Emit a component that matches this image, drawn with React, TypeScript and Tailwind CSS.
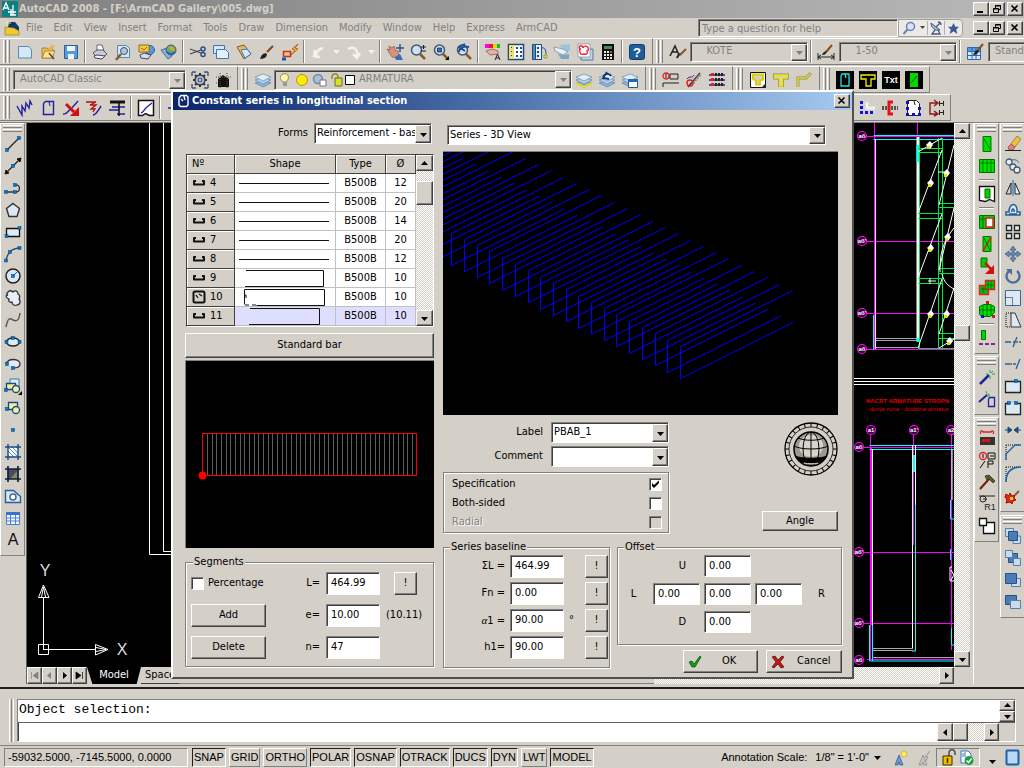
import type { ReactNode } from "react";

const raised =
  "border border-t-white border-l-white border-r-[#404040] border-b-[#404040] shadow-[inset_-1px_-1px_0_#808080] bg-[#d4d0c8]";
const sunken =
  "border border-t-[#808080] border-l-[#808080] border-r-white border-b-white shadow-[inset_1px_1px_0_#404040]";
const dither =
  "bg-[repeating-conic-gradient(#ffffff_0_25%,#d4d0c8_0_50%)] bg-[length:2px_2px]";

// ---------------------------------------------------------------- icons

const page = <path d="M2.500 3.500h10l3 3v8.500h-13z" fill="#d5e8f7" stroke="#5b87b0" />;
const lens = (
  <>
    <path d="M11 11l5 5" stroke="#8a5a28" strokeWidth="2.5" />
    <circle cx="7.500" cy="7" r="5" fill="#cfe0f0" stroke="#3f5878" strokeWidth="1.500" />
  </>
);
const layers = (
  <>
    <path d="M1 12l8-3 8 3-8 4z" fill="#8fb4d8" stroke="#5078a0" strokeWidth=".6" />
    <path d="M1 9l8-3 8 3-8 4z" fill="#b8d2ea" stroke="#5078a0" strokeWidth=".6" />
    <path d="M1 6l8-3 8 3-8 4z" fill="#e0edf8" stroke="#5078a0" strokeWidth=".6" />
  </>
);
const greenBox = <path d="M5 1.500h8v15H5z" fill="#00e000" stroke="#007000" />;
const dot = (x: number, y: number) => (
  <rect x={x - 1.5} y={y - 1.5} width="3" height="3" fill="#0078d8" stroke="#00407c" strokeWidth=".5" />
);

const icons: Record<string, ReactNode> = {
  New: page,
  Open: (
    <>
      <path d="M3 5h5l1 1h5v9H3z" fill="#e8c050" stroke="#8a6a20" strokeWidth=".7" />
      <path d="M3 15l3-7h10l-3 7z" fill="#ffe28a" stroke="#8a6a20" strokeWidth=".7" />
      <path d="M9 6l4-4 3 1-4 5z" fill="#f0b040" />
      <path d="M10 10l5 6" stroke="#446" strokeWidth="1.500" />
    </>
  ),
  Save: (
    <>
      <path d="M2.500 2.500h13v13h-13z" fill="#5a9ad8" stroke="#2a5e98" />
      <path d="M5 3h8v5H5zM6 11h6v5H6z" fill="#eaf4fc" />
    </>
  ),
  Plot: (
    <>
      <path d="M6 2h5l2 6H6z" fill="#fff" stroke="#667" />
      <path d="M2 10l4-3h6l4 4-4 3-7-1z" fill="#c8ccd8" stroke="#556" />
      <path d="M3 13l3-1 8 1-3 3-7-1z" fill="#eef" stroke="#446" />
    </>
  ),
  "Plot Preview": (
    <>
      <path d="M3.500 2.500h9l3 3v9h-12z" fill="#d5e8f7" stroke="#5b87b0" />
      <circle cx="10" cy="8" r="3.500" fill="#a9c8e4" stroke="#456" />
      <path d="M7 11l-5 6" stroke="#8a5a28" strokeWidth="2.500" />
    </>
  ),
  Publish: (
    <>
      <circle cx="13" cy="7" r="4.500" fill="#5a9ad8" stroke="#2a5e98" />
      <path d="M2 2h10v7H2z" fill="#f4d040" stroke="#8a6a20" />
      <path d="M4 5l3 2 3-3" stroke="#b05020" fill="none" />
      <path d="M3 12l4-2 7 2-3 4-7-1z" fill="#d8dce8" stroke="#446" />
    </>
  ),
  "3DDWF": (
    <>
      <path d="M1 7l6-2 5 8-4 3z" fill="#8fb4d8" stroke="#4a6a8a" />
      <circle cx="11" cy="7" r="5" fill="#60b060" stroke="#2a5e98" />
      <path d="M8 4c4-2 7 1 7 4l-4-1z" fill="#e0a030" />
      <path d="M7 9c3 3 6 2 8 0" stroke="#3060c0" strokeWidth="2" fill="none" />
    </>
  ),
  Cut: (
    <>
      <path d="M1 6l11 4M1 11l11-4" stroke="#445" strokeWidth="1.300" />
      <circle cx="14" cy="6" r="2" fill="none" stroke="#2a4e88" strokeWidth="1.500" />
      <circle cx="14" cy="11.500" r="2" fill="none" stroke="#2a4e88" strokeWidth="1.500" />
    </>
  ),
  Copy: (
    <>
      <path d="M1.500 2.500h11v8h-11z" fill="#d5e8f7" stroke="#3878b8" />
      <path d="M4.500 6.500h9l3 3v6h-12z" fill="#e4f1fb" stroke="#3878b8" />
    </>
  ),
  Paste: (
    <>
      <path d="M2 4l7-2 7 9-7 5z" fill="#e8b860" stroke="#8a5a20" />
      <path d="M6 7l6-1 4 5-6 4z" fill="#d5e8f7" stroke="#3878b8" />
    </>
  ),
  Brush: (
    <>
      <path d="M9 9l6-6" stroke="#7a4a20" strokeWidth="2.200" />
      <path d="M2 16c1-4 3-6 6-6l1 2c-1 3-4 4-7 4z" fill="#222" />
    </>
  ),
  "Match Properties": (
    <>
      <path d="M2.500 8.500h7v5h-7z" fill="#e8c0a0" stroke="#c83010" strokeWidth="1.500" />
      <path d="M17 1l-6 5 3 1-4 5 7-6-3-1z" fill="#ffc020" stroke="#a04010" strokeWidth=".7" />
      <path d="M1 16h4" stroke="#0060c8" strokeWidth="3" />
    </>
  ),
  Undo: <path d="M6 15c-1-6 3-9 7-10M5 7l-1 6 6 1" stroke="#f4f2ee" strokeWidth="2.500" fill="none" />,
  Redo: <path d="M3 6c6-3 10 0 9 7M8 11l4 4 3-5" stroke="#f4f2ee" strokeWidth="2.500" fill="none" />,
  Pan: (
    <>
      <path d="M1 6l3 1-1-4 3 2 2-2 1 4 3 1 1 4-3 3-4-1z" fill="#d89080" stroke="#8a4030" strokeWidth=".6" />
      <path d="M9 14l5-3 3 6h-7z" fill="#3070c0" />
      <path d="M14 1v8M10 5h8" stroke="#2a4e88" strokeWidth="1.400" />
    </>
  ),
  Zoom: (
    <>
      {lens}
      <path d="M12 4h5M14.500 2v4M12 8h5" stroke="#223" />
    </>
  ),
  "Zoom Window": (
    <>
      {lens}
      <path d="M5.500 5h4v4h-4z" fill="#3878b8" stroke="#113" strokeWidth=".7" />
      <path d="M17 13v4h-4z" fill="#000" />
    </>
  ),
  "Zoom Previous": (
    <>
      {lens}
      <path d="M4 9c0-4 5-6 10-5M10 1L4 4l6 4" stroke="#1e4a90" strokeWidth="1.800" fill="none" />
    </>
  ),
  Properties: (
    <>
      <path d="M1 1h4v4H1z" fill="#f0f" />
      <path d="M5 1h4v4H5z" fill="#e02020" />
      <path d="M9 1h4v4H9z" fill="#f0d000" />
      <path d="M13 1h3v4h-3z" fill="#00c040" />
      <path d="M2 8l6-2 6 2v3l-8 1z" fill="#e8b0a0" stroke="#8a4a40" strokeWidth=".7" />
      <path d="M11 17l2.500-6 2.500 6M12 15h3" stroke="#223" fill="none" />
    </>
  ),
  DesignCenter: (
    <>
      <path d="M1.500 1.500h15v15h-15z" fill="#fff" stroke="#1a4a80" strokeWidth="1.500" />
      <path d="M2 2h5v14H2z" fill="#f0e070" />
      <path d="M9 4h2v2H9zM13 4h2v2h-2zM9 8h2v2H9zM13 8h2v2h-2zM9 12h2v2H9zM13 12h2v2h-2zM4 4h1v1H4zM4 8h1v1H4zM4 12h1v1H4z" fill="#1a4a80" />
    </>
  ),
  "Tool Palettes": (
    <>
      <path d="M2.500 1.500h3v15h-3z" fill="#5a8ab8" stroke="#1a4a80" />
      <path d="M5.500 1.500h6v15h-6z" fill="#e4f0fa" stroke="#1a4a80" />
      <path d="M7 4h2v2H7zM7 8h2v2H7zM7 12h2v2H7z" fill="#1a4a80" />
      <path d="M11 5c4-1 5 2 5 6" stroke="#1a4a80" fill="none" />
      <path d="M14 12h3v3h-3z" fill="#f0e040" stroke="#554" strokeWidth=".5" />
    </>
  ),
  "Sheet Set Manager": (
    <>
      <path d="M7 2l10-1v7H9z" fill="#9cc4dc" />
      <path d="M1 4l9 2 5 3-5 3-8-4z" fill="#e8eff4" stroke="#6a8a9a" strokeWidth=".7" />
      <path d="M5 11l6 1 5-1v5H8z" fill="#78a8c8" />
    </>
  ),
  "Markup Set Manager": (
    <>
      <path d="M5 6h12v11H5z" fill="#c0d4e8" stroke="#5a7a9a" />
      <path d="M2 1h12v13H2z" fill="#fff" stroke="#5a7a9a" strokeWidth=".6" />
      <path d="M4 3c2-1 3 1 3 2 1-3 5-2 5 0 1 2 0 3-1 3 1 2 0 4-3 3-2 1-4 0-4-2-1-2 0-3 1-3-2 0-2-2-1-3z" fill="none" stroke="#f02030" strokeWidth="1.400" />
    </>
  ),
  QuickCalc: (
    <>
      <path d="M3 1h12v16H3z" fill="#111" />
      <path d="M5 3h8v3H5z" fill="#4a8a4a" />
      <path d="M5 8h2v2H5zM8 8h2v2H8zM5 11h2v2H5zM8 11h2v2H8zM11 11h2v2h-2zM5 14h2v2H5zM8 14h2v2H8zM11 14h2v2h-2z" fill="#e8e8e8" />
      <path d="M11 8h2v2h-2z" fill="#f03030" />
    </>
  ),
  Help: (
    <>
      <rect x="1.500" y="1.500" width="15" height="15" rx="2" fill="#1f5c9c" stroke="#143c68" />
      <text x="9" y="14" textAnchor="middle" fontSize="13" fontWeight="700" fill="#fff">?</text>
    </>
  ),
  "Text Style": (
    <>
      <path d="M1 13L6 3l4 9M3 9h5" stroke="#222" strokeWidth="1.500" fill="none" />
      <path d="M8 15c1-3 3-4 4-4" stroke="#222" strokeWidth="2" fill="none" />
      <path d="M11 12l6-6" stroke="#8a5a20" strokeWidth="2.200" />
    </>
  ),
  "Dimension Style": (
    <>
      <path d="M1 10v7M17 10v7M1 14h16M4 12l-3 2 3 2M14 12l3 2-3 2" stroke="#222" fill="none" />
      <path d="M9 9l6-7" stroke="#8a4a20" strokeWidth="2" />
      <path d="M5 12c1-3 3-4 5-4-1 3-2 4-5 4z" fill="#222" />
    </>
  ),
  "Table Style": (
    <>
      <path d="M1.500 4.500h13v12h-13z" fill="#d5e8f7" stroke="#2a6ab0" />
      <path d="M2 5h12v3H2z" fill="#5a9ad8" />
      <path d="M6 5v11M10 5v11M2 8.500h12M2 12.500h12" stroke="#2a6ab0" />
      <path d="M12 7l5-6" stroke="#8a4a20" strokeWidth="2" />
      <path d="M7 12c1-3 3-5 5-5l1 1c-1 3-3 4-6 4z" fill="#222" />
    </>
  ),
  "Workspace Settings": (
    <>
      <path d="M1 1h4M1 1v4M17 1h-4M17 1v4M1 17h4M1 17v-4M17 17h-4M17 17v-4" stroke="#3a5a7a" strokeWidth="1.400" fill="none" />
      <path d="M9 2v14M2 9h14M4 4l10 10M14 4L4 14" stroke="#334" strokeWidth="2" />
      <circle cx="9" cy="9" r="5" fill="#a8c4dc" stroke="#334" strokeWidth="1.300" />
      <circle cx="9" cy="9" r="2" fill="#d4d0c8" stroke="#334" />
    </>
  ),
  "My Workspace": (
    <>
      <path d="M4 8l5-4 6 4v8H4z" fill="#111" />
      <path d="M2 6h15M6 2v15M13 2v15M2 12h2" stroke="#555" strokeDasharray="1 1" />
    </>
  ),
  Layers: layers,
  "Layer Current": (
    <>
      {layers}
      <path d="M1 11l8 4 8-4v2l-8 4-8-4z" fill="#f0d800" />
    </>
  ),
  "Layer Previous": (
    <>
      {layers}
      <path d="M5 8c0-5 6-7 8-3M9 1L5 7l6 1" stroke="#123a70" strokeWidth="1.800" fill="none" />
    </>
  ),
  "Layer States": (
    <>
      {layers}
      <path d="M7.500 8.500h9v8h-9z" fill="#fff" stroke="#1e5a98" />
      <path d="M7 8h10v3H7z" fill="#1e6ab8" />
    </>
  ),
  "Bar Label": (
    <>
      <circle cx="4" cy="5" r="3" fill="none" stroke="#e02020" strokeWidth="1.300" />
      <path d="M4 3v4M8 3h8v5H8zM1 12h16M1 12v4" stroke="#222" fill="none" />
    </>
  ),
  "Bar Edit": (
    <>
      <path d="M3 16L15 2" stroke="#333" strokeWidth="1.500" />
      <path d="M8 12l8-9" stroke="#888" strokeWidth="2.500" strokeDasharray="2 1" />
      <circle cx="5" cy="12" r="3" fill="none" stroke="#e02020" strokeWidth="1.400" />
      <path d="M2 8c3-4 5 0 7-4" stroke="#2030a0" fill="none" />
    </>
  ),
  "Bar List": (
    <>
      <path d="M1 4h16M1 9h16M1 14h16" stroke="#2020a0" strokeWidth="1.500" />
      <path d="M7 3.500h9M7 8.500h9M7 13.500h9" stroke="#222" strokeWidth="3" strokeDasharray="2 1" />
      <path d="M3 3.500h3M3 8.500h3M3 13.500h3" stroke="#e02020" strokeWidth="3" />
    </>
  ),
  "Section Box": (
    <>
      <path d="M1.500 1.500h15v15h-15z" fill="#fff" stroke="#111" />
      <path d="M4 3.500h10v5l-3 1v4H7v-4L4 8z" fill="#d4d0c8" stroke="#d8d000" strokeWidth="2" />
      <path d="M12 17l5-5v5z" fill="#222" />
    </>
  ),
  "Section T": (
    <>
      <path d="M1 2.500h16v6h-5V16H6V8.500H1z" fill="#888" />
      <path d="M2.500 4h13v3h-5v8h-3V7h-5z" fill="#d4d0c8" stroke="#f0e800" strokeWidth="1.500" />
    </>
  ),
  "Section L": (
    <>
      <path d="M3 16V7h8l5-5" stroke="#888" strokeWidth="3" fill="none" />
      <path d="M3 16V7h8l5-5" stroke="#e8e000" strokeWidth="1.500" fill="none" />
    </>
  ),
  "Module Bar": (
    <>
      <path d="M0 0h18v18H0z" fill="#000" />
      <path d="M6 3h7v12H5V5zM9 3l1 4" stroke="#20e0e0" fill="none" strokeWidth="1.300" />
    </>
  ),
  "Module Section": (
    <>
      <path d="M0 0h18v18H0z" fill="#000" />
      <path d="M2 4h14v4h-4v7H7V8H2z" stroke="#f0f000" fill="none" strokeWidth="1.300" />
    </>
  ),
  "Module Text": (
    <>
      <path d="M0 0h18v18H0z" fill="#000" />
      <text x="9" y="12" textAnchor="middle" fontSize="9" fontWeight="700" fill="#fff">Txt</text>
    </>
  ),
  "Module Mesh": (
    <>
      <path d="M0 0h18v18H0z" fill="#000" />
      <path d="M5 2h8v14H5z" fill="#00d800" />
      <path d="M6 12l6-7" stroke="#006000" />
    </>
  ),
  "Series Spring": <path d="M1 7l5 9 0-9 3 5 1-8 3 5 1-7 2 4" stroke="#20209c" strokeWidth="1.400" fill="none" />,
  "Constant Series": (
    <>
      <path d="M6.500 2.500h8v13h-10v-11z" fill="none" stroke="#20209c" strokeWidth="1.400" />
      <path d="M10 3l1 4" stroke="#20209c" />
    </>
  ),
  "Delete Series": (
    <>
      <path d="M1 15c4 1 5-4 8-5l7-8" stroke="#20209c" fill="none" strokeWidth="1.400" />
      <path d="M4 5l8 8" stroke="#d01010" strokeWidth="3" />
      <path d="M17 17V8l-9 9z" fill="#d01010" />
    </>
  ),
  "Variable Series": (
    <>
      <path d="M1 3h10l-6 3h6l-5 4h4l-2 3" stroke="#b01010" fill="none" strokeWidth="1.300" />
      <path d="M8 16c3 0 5-4 8-9" stroke="#20209c" strokeWidth="1.500" fill="none" />
    </>
  ),
  "Series Layout": (
    <>
      <path d="M2 3h15" stroke="#111" strokeWidth="3" />
      <path d="M4 8h13M1 11h10M9 15h8" stroke="#20209c" strokeWidth="1.500" />
      <path d="M11 4v13" stroke="#111" strokeWidth="1.600" />
    </>
  ),
  "Draw Bar": (
    <>
      <path d="M1.500 1.500h15v15h-4l-4-2-3 2h-4z" fill="#fff" stroke="#111" strokeWidth="1.500" />
      <path d="M4 14c3-1 3-4 6-6l5-4" stroke="#20209c" fill="none" strokeWidth="1.300" />
    </>
  ),
  "Series Cut": <path d="M2 9h14M9 3v12" stroke="#20209c" strokeWidth="1.500" fill="none" />,
  "Corner Points": (
    <>
      <path d="M9 3v6h8" stroke="#f4f2ee" strokeWidth="3" fill="none" />
      <path d="M2 2h3v3H2zM2 7h3v3H2zM2 12h3v3H2zM7 12h3v3H7zM12 12h3v3h-3z" fill="#1010e0" />
    </>
  ),
  "Bar Clamp": (
    <>
      <path d="M1 9h16" stroke="#555" strokeWidth="4" strokeDasharray="2 1" />
      <path d="M12 3H8v12h4" stroke="#e81010" strokeWidth="3" fill="none" />
    </>
  ),
  "Column Points": (
    <>
      <path d="M3.500 1.500h9l3 3v12h-12z" fill="#fff" stroke="#222" />
      <path d="M10 2l1 4" stroke="#222" />
      <path d="M2 2h3v3H2zM2 8h3v3H2zM2 14h3v3H2zM14 8h3v3h-3zM14 14h3v3h-3zM8 14h3v3H8z" fill="#1010c0" />
    </>
  ),
  "Bar Couple": (
    <>
      <path d="M10 4H3v11h7M7 1l4 3-4 3M7 12l4 3-4 2" stroke="#901818" strokeWidth="1.400" fill="none" />
      <path d="M12.500 2v5M16.500 2v5M12 4.500h5M12.500 11v5M16.500 11v5M12 13.500h5" stroke="#222" fill="none" />
    </>
  ),
  Line: <><path d="M3 15L15 3" stroke="#222" strokeWidth="1.300" />{dot(3, 15)}{dot(15, 3)}</>,
  "Construction Line": (
    <>
      <path d="M2 16L16 2" stroke="#222" strokeWidth="1.300" />
      <path d="M1 17l1-4 3 3zM17 1l-4 1 3 3z" fill="#111" stroke="#111" />
      {dot(9, 9)}
    </>
  ),
  Polyline: <><path d="M2 13h9M11 6c6-1 6 7 0 7" stroke="#333" fill="none" strokeWidth="1.300" />{dot(2, 13)}{dot(11, 13)}{dot(11, 6)}</>,
  Polygon: <path d="M9 2.500l6.500 5-2.500 8H5l-2.500-8z" fill="#dce9f5" stroke="#333" strokeWidth="1.400" />,
  Rectangle: <><path d="M2.500 5.500h13v8h-13z" fill="#e0ebf5" stroke="#111" strokeWidth="1.300" />{dot(2.5, 13)}{dot(15.5, 5)}</>,
  Arc: <><path d="M2 16C3 8 8 3 16 3" stroke="#444" fill="none" strokeWidth="1.400" />{dot(2, 15.5)}{dot(6, 7)}{dot(15.5, 3)}</>,
  Circle: <><circle cx="9" cy="9" r="7" fill="#dce9f5" stroke="#222" strokeWidth="1.500" /><path d="M9 9l4-4" stroke="#0060c0" />{dot(9, 9)}</>,
  "Revision Cloud": <path d="M4 3c2-2 4-1 5 0 2-2 5-1 5 2 2 1 2 3 1 5 2 2 1 6-2 6-2 1-5 0-5-3-2 1-4-1-3-3C2 9 1 6 4 6 2 5 3 4 4 3z" fill="#e6eff7" stroke="#333" strokeWidth="1.300" />,
  Spline: <path d="M2 16c2-10 4-9 7-7 4 2 6 0 7-7" stroke="#555" fill="none" strokeWidth="1.400" />,
  Ellipse: <><ellipse cx="9" cy="9" rx="6.500" ry="4" fill="#e0ebf5" stroke="#222" strokeWidth="1.300" />{dot(2.5, 9)}{dot(15.5, 9)}{dot(9, 5)}</>,
  "Ellipse Arc": <><path d="M3 9c-1-6 13-6 13 0 0 4-5 4-7 4" fill="#e0ebf5" stroke="#333" strokeWidth="1.300" />{dot(3, 9)}{dot(9, 13)}</>,
  "Insert Block": (
    <>
      <path d="M6 2h9v9H6z" fill="#dcecf8" stroke="#3878b8" />
      <path d="M2.500 6.500h9v6h-9z" fill="#f0f0a0" stroke="#1a4a80" strokeWidth="1.300" />
      <circle cx="12" cy="12" r="3.500" fill="#f0f0a0" stroke="#1a4a80" strokeWidth="1.300" />
      {dot(2, 13)}
      <path d="M18 14v4h-4z" fill="#000" />
    </>
  ),
  "Make Block": (
    <>
      <path d="M4.500 3.500h9v7h-9z" fill="#f0f0a0" stroke="#1a4a80" strokeWidth="1.300" />
      <circle cx="12" cy="11" r="3.500" fill="#f0f0a0" stroke="#1a4a80" strokeWidth="1.300" />
      {dot(3, 10)}
    </>
  ),
  Point: dot(9, 9),
  Hatch: (
    <>
      <path d="M4 4h10v10H4z" fill="#fff" />
      <path d="M4 8l6 6M4 4l10 10M8 4l6 6M12 4l2 2M4 12l2 2" stroke="#5090d0" />
      <path d="M4 1v16M14 1v16M1 4h16M1 14h16" stroke="#1a4a80" strokeWidth="1.400" />
    </>
  ),
  Gradient: (
    <>
      <path d="M4 4h10v10H4z" fill="#4a4a68" />
      <path d="M14 5v9H6z" fill="#8a8a50" />
      <path d="M4 1v16M14 1v16M1 4h16M1 14h16" stroke="#10203c" strokeWidth="1.700" />
    </>
  ),
  Region: (
    <>
      <path d="M1.500 3.500h8l7 6v6h-15z" fill="#d8e8f6" stroke="#2a5e98" strokeWidth="1.400" />
      <circle cx="9" cy="10" r="3" fill="#fff" stroke="#4a6a8a" strokeWidth="1.500" />
    </>
  ),
  Table: (
    <>
      <path d="M2.500 3.500h13v12h-13z" fill="#eef6fd" stroke="#4a80d0" />
      <path d="M2 3h14v3H2z" fill="#3a70d0" />
      <path d="M6.500 6v9M11.500 6v9M3 9h12M3 12h12" stroke="#4a80d0" />
    </>
  ),
  "Multiline Text": <text x="9" y="14" textAnchor="middle" fontSize="16" fill="#111">A</text>,
  "Mesh Single": <>{greenBox}<path d="M6 4l6 10" stroke="#007000" /></>,
  "Mesh Group": <><path d="M1.500 2.500h15v13h-15z" fill="#00e000" stroke="#007000" /><path d="M5 2v14M9 2v14M13 2v14M1 6h16" stroke="#007000" strokeWidth=".8" /></>,
  "Mesh Sheet": <><path d="M1.500 1.500h15v15l-5-2-4 2-6-1z" fill="#fff" stroke="#111" strokeWidth="1.300" /><path d="M7 4h5v9H7z" fill="#00d000" stroke="#007000" /></>,
  "Mesh Opening": <><path d="M1.500 2.500h15v13h-15z" fill="#00d000" stroke="#007000" /><path d="M5 2v14M1 6h16" stroke="#007000" /><path d="M8 5h7v9H8z" fill="#fff" stroke="#e02020" strokeWidth="1.500" /></>,
  "Mesh Delete": <>{greenBox}<path d="M5 16l8-14" stroke="#e02020" strokeWidth="1.600" /><path d="M6 3l6 12" stroke="#007000" /></>,
  "Mesh Move": <><path d="M3 1h6v9H3z" fill="#00d000" stroke="#007000" /><path d="M7 6l6 6" stroke="#d01010" strokeWidth="2.500" /><path d="M16 17V8l-9 9z" fill="#d01010" /></>,
  "Mesh Cut": <><path d="M1.500 6.500h9v9h-9z" fill="#00c000" stroke="#e02020" strokeWidth="1.400" /><path d="M7.500 1.500h9v9h-9z" fill="#00d000" stroke="#e02020" strokeWidth="1.400" /><path d="M10 2v8M13 2v8M8 6h8M3 10h6M5 8v6" stroke="#006000" strokeWidth=".8" /></>,
  "Mesh Fill": <><path d="M1.500 5.500l4-2h7l4 2v6l-4 4h-9l-2-2z" fill="#00e000" stroke="#007000" /><path d="M1 9h16M5 4v11M9 4v11M13 4v10" stroke="#007000" /><path d="M8 0h3v3H8z" fill="#c02020" /><path d="M3 14h3v3H3z" fill="#1010e0" /><path d="M14 14h3v3h-3z" fill="#c02020" /></>,
  "Mesh Section": <><path d="M3.500 1.500h4v9h-4z" fill="#00d800" stroke="#007000" /><path d="M1 15h16" stroke="#902090" strokeWidth="2" strokeDasharray="4 2" /></>,
  Wand: <><path d="M2 16L11 7" stroke="#20209c" strokeWidth="2.500" /><path d="M12 2v3M12 8v3M8 6h2M14 6h3M15 3l-2 2" stroke="#20a040" /></>,
  "Wand Bar": <><path d="M1 12l8-7" stroke="#20209c" strokeWidth="2" /><path d="M8 1l1 3 3 1-3 2" stroke="#20c040" fill="none" /><path d="M11.500 7.500h5v9h-6v-7z" fill="none" stroke="#20209c" strokeWidth="1.300" /></>,
  "Bar Table": <><path d="M3 5c-2-3 2-4 2-2h8c0-2 4-1 2 2" stroke="#e02020" fill="none" strokeWidth="1.300" /><path d="M2 8h15v8H2z" fill="#333" /><path d="M4 10h8v3H4z" fill="#e01010" /></>,
  "Bar Percent": <><circle cx="5" cy="5" r="3.500" fill="none" stroke="#e02020" strokeWidth="1.300" /><path d="M5 3v4M10 2h7v6h-7zM12 5h4M2 17l5-7M10 17v-7h5v3h-5" stroke="#111" fill="none" /></>,
  Hammer: <><path d="M2 16L11 6" stroke="#7a2010" strokeWidth="2.200" /><path d="M7 3l4-1 6 6-2 2-4-4-2 1z" fill="#5a5a20" stroke="#222" strokeWidth=".7" /></>,
  "Radius Label": <><circle cx="5" cy="4" r="3" fill="none" stroke="#222" /><path d="M1 1h16M5 4h4" stroke="#222" /><text x="12" y="15" textAnchor="middle" fontSize="9" fill="#222">R1</text></>,
  "Draw Order": <><path d="M5.500 5.500h11v11h-11z" fill="#fff" stroke="#111" strokeWidth="1.300" /><path d="M1.500 1.500h7v7h-7z" fill="#fff" stroke="#111" strokeWidth="1.300" /></>,
  Erase: <><path d="M7 9l6-8 4 3-6 8z" fill="#f0c040" stroke="#8a6a20" strokeWidth=".7" /><path d="M4 12l3-3 4 3-2 3H5z" fill="#e08080" stroke="#844" strokeWidth=".7" /><path d="M1 15.500h16" stroke="#222" /></>,
  "Copy Object": <><path d="M8 3c4-1 6 1 7 3" stroke="#2060a8" fill="none" /><circle cx="5" cy="5" r="3" fill="#e4eef8" stroke="#4a5a6a" strokeWidth="1.300" /><circle cx="9" cy="10" r="3" fill="#e4eef8" stroke="#4a5a6a" strokeWidth="1.300" /><circle cx="13" cy="13" r="3" fill="#e4eef8" stroke="#4a5a6a" strokeWidth="1.300" /></>,
  Mirror: <><path d="M7 4v11H2z" fill="#d4d0c8" stroke="#222" /><path d="M11 4v11h5z" fill="#e4eef8" stroke="#222" /><path d="M9 1v16" stroke="#3080d0" strokeWidth="1.300" /></>,
  Offset: <path d="M2 14h14v-3h-3c1-10-8-10-8 0H2zM5 13h8M8 11c-1-4 3-4 2 0" stroke="#2a5e98" strokeWidth="1.500" fill="#dce9f5" />,
  Array: <path d="M2.500 2.500h5v5h-5zM10.500 2.500h5v5h-5zM2.500 10.500h5v5h-5zM10.500 10.500h5v5h-5z" fill="#e4eef8" stroke="#222" strokeWidth="1.300" />,
  Move: <path d="M9 1l3 4h-2v3h3V6l4 3-4 3v-2h-3v3h2l-3 4-3-4h2v-3H5v2L1 9l4-3v2h3V5H6z" fill="#6a8cb0" stroke="#3a5a80" strokeWidth=".7" />,
  Rotate: <><path d="M5 4a6.500 6.500 0 1 0 8 0" stroke="#4a6f98" strokeWidth="2.400" fill="none" /><path d="M2 2h6v6z" fill="#4a6f98" /></>,
  Scale: <><path d="M1.500 1.500h15v15h-15z" fill="#dce9f5" stroke="#3a6a98" /><path d="M1.500 8.500h7v8" stroke="#111" strokeDasharray="1 1" fill="none" /></>,
  Stretch: <><path d="M7 2h4l6 14H7z" fill="#dce9f5" stroke="#333" /><path d="M7 2H2v14h5" stroke="#111" strokeDasharray="1 1" fill="none" /></>,
  Trim: <><path d="M1 9h6M13 4l-4 10" stroke="#2060a8" strokeWidth="1.300" /><path d="M9 9h8" stroke="#222" strokeDasharray="2 1" /></>,
  Extend: <><path d="M1 9h4M16 4l-4 10" stroke="#2060a8" strokeWidth="1.300" /><path d="M5 9h8" stroke="#222" strokeDasharray="3 1" /></>,
  "Break Point": <><path d="M1.500 4.500h15v11h-15z" fill="#dce9f5" stroke="#222" strokeWidth="1.300" />{dot(12, 4)}</>,
  Break: <><path d="M6 4.500H1.500v11h15v-11H12" fill="#dce9f5" stroke="#222" strokeWidth="1.300" />{dot(5, 4)}{dot(12, 4)}</>,
  Join: <path d="M1 9h5M17 9h-5M4 6l4 3-4 3zM14 6l-4 3 4 3z" fill="#1e4a78" stroke="#1e4a78" />,
  Chamfer: <><path d="M2 2h14M2 2v15" stroke="#111" strokeDasharray="1 1" /><path d="M2 17v-6l9-9h6" stroke="#2060a8" strokeWidth="1.300" fill="none" /></>,
  Fillet: <><path d="M2 2h14M2 2v15" stroke="#111" strokeDasharray="1 1" /><path d="M2 17C2 8 6 2 17 2" stroke="#2060a8" strokeWidth="1.500" fill="none" /></>,
  Explode: <><path d="M2 7l3 2 1-3 2 3 3-1-1 3 2 2-3 1-1 3-2-2-4 1 1-3-2-3z" fill="#e02818" stroke="#a01008" /><path d="M6 10h3v3H6z" fill="#ffd020" /><path d="M11 8l4-4" stroke="#8a5a28" strokeWidth="2" /></>,
  "Bring to Front": <><path d="M1.500 1.500h8v8h-8zM9 9h7.500v7.500H9z" fill="#c8dcee" stroke="#5a80a8" /><path d="M4.500 4.500h9v9h-9z" fill="#4a7cb8" stroke="#2a5080" /></>,
  "Send to Back": <><path d="M4.500 4.500h9v9h-9z" fill="#4a7cb8" stroke="#2a5080" /><path d="M1.500 1.500h7v7h-7zM9.500 9.500h7v7h-7z" fill="#c8dcee" stroke="#5a80a8" /></>,
  "Bring Above": <><path d="M7.500 7.500h9v8h-9z" fill="#c8dcee" stroke="#5a80a8" /><path d="M1.500 2.500h11v10h-11z" fill="#4a7cb8" stroke="#2a5080" /></>,
  "Send Under": <><path d="M1.500 2.500h11v9h-11z" fill="#4a7cb8" stroke="#2a5080" /><path d="M6.500 7.500h10v8h-10z" fill="#c8dcee" stroke="#5a80a8" /></>,
};

// ---------------------------------------------------------------- small parts

function ToolButton({ name }: { name: string }) {
  return (
    <button
      type="button"
      aria-label={name}
      className="flex h-[22px] w-[23px] shrink-0 items-center justify-center"
    >
      <svg width="18" height="18" viewBox="0 0 18 18" fontFamily="Liberation Sans, sans-serif">
        {icons[name]}
      </svg>
    </button>
  );
}

function Tools({ names, vertical = false }: { names: string[]; vertical?: boolean }) {
  return (
    <>
      {names.map((name, i) =>
        name === "|" ? (
          <span
            key={i}
            className={
              vertical
                ? "mx-1 my-[2px] h-[2px] self-stretch border-t border-[#808080] bg-white"
                : "mx-[2px] my-px w-[2px] shrink-0 self-stretch border-l border-[#808080] bg-white"
            }
          />
        ) : (
          <ToolButton key={i} name={name} />
        )
      )}
    </>
  );
}

function Toolbar({ children, className = "" }: { children: ReactNode; className?: string }) {
  return (
    <div
      className={`flex h-[27px] shrink-0 items-center border-t border-r border-b border-t-white border-r-[#808080] border-b-[#808080] ${className}`}
    >
      <span className="flex w-[13px] shrink-0 gap-px self-stretch py-px pl-[3px]">
        <span className="w-[3px] border-x border-l-white border-r-[#808080]" />
        <span className="w-[3px] border-x border-l-white border-r-[#808080]" />
      </span>
      {children}
    </div>
  );
}

function SideBar({ names }: { names: string[] }) {
  return (
    <div className="flex w-[25px] flex-col items-center border-t border-r border-b border-l border-t-white border-r-[#808080] border-b-[#808080] border-l-white pb-1">
      <span className="flex h-[9px] shrink-0 flex-col gap-px self-stretch px-[2px] pt-px">
        <span className="h-[3px] border-y border-t-white border-b-[#808080]" />
        <span className="h-[3px] border-y border-t-white border-b-[#808080]" />
      </span>
      <Tools names={names} vertical />
    </div>
  );
}

function Triangle({ dir = "down", color = "#000" }: { dir?: "up" | "down" | "left" | "right"; color?: string }) {
  const shapes = {
    up: "M1 6h7L4.5 2z",
    down: "M1 3h7L4.5 7z",
    left: "M6 1v7L2 4.500z",
    right: "M3 1v7l4-3.500z",
  };
  return (
    <svg width="9" height="9" viewBox="0 0 9 9">
      <path d={shapes[dir]} fill={color} />
    </svg>
  );
}

function Combo({
  id,
  value,
  label,
  className = "",
  muted = false,
}: {
  id?: string;
  value: string;
  label?: string;
  className?: string;
  muted?: boolean;
}) {
  return (
    <div className={`relative ${sunken} ${muted ? "bg-[#d4d0c8] text-[#808080]" : "bg-white"} ${className}`}>
      <select
        id={id}
        aria-label={label}
        defaultValue={value}
        className={`h-full w-full appearance-none bg-transparent outline-none ${muted ? "pr-4 pl-[6px]" : "pr-4 pl-[2px]"}`}
      >
        <option>{value}</option>
      </select>
      <span
        className={`pointer-events-none absolute top-px right-0 bottom-0 flex w-4 items-center justify-center ${raised}`}
      >
        <Triangle color={muted ? "#808080" : "#000"} />
      </span>
    </div>
  );
}

function NumberBox({ id, value, label, className = "" }: { id?: string; value: string; label?: string; className?: string }) {
  return (
    <input
      id={id}
      aria-label={label}
      defaultValue={value}
      className={`min-w-0 bg-white pb-[2px] pl-1 outline-none ${sunken} ${className}`}
    />
  );
}

function PushButton({ children, className = "", label }: { children: ReactNode; className?: string; label?: string }) {
  return (
    <button
      type="button"
      aria-label={label}
      className={`flex items-center justify-center ${raised} ${className}`}
    >
      {children}
    </button>
  );
}

function CheckBox({ id, checked = false, disabled = false }: { id: string; checked?: boolean; disabled?: boolean }) {
  return (
    <span className="relative flex size-[13px] shrink-0">
      <input
        id={id}
        type="checkbox"
        defaultChecked={checked}
        disabled={disabled}
        className={`peer size-[13px] appearance-none ${sunken} ${disabled ? "bg-[#d4d0c8]" : "bg-white"}`}
      />
      <svg
        className="pointer-events-none absolute inset-0 hidden peer-checked:block"
        width="13"
        height="13"
        viewBox="0 0 13 13"
      >
        <path d="M3 5v3l2 2 5-5V2.500L5 7z" fill="#000" />
      </svg>
    </span>
  );
}

function WindowButtons() {
  return (
    <div className="flex pr-px text-black">
      <PushButton label="Minimize" className="h-[14px] w-4">
        <svg width="10" height="10"><path d="M1 8h6" stroke="#000" strokeWidth="2" /></svg>
      </PushButton>
      <PushButton label="Restore" className="h-[14px] w-4">
        <svg width="10" height="10" fill="none" stroke="#000">
          <path d="M3.500 4V1.500h5v4H7M3 2h6M1.500 4.500h5v4h-5zM1 5h6" />
        </svg>
      </PushButton>
      <PushButton label="Close" className="ml-[2px] h-[14px] w-4">
        <svg width="10" height="10"><path d="M1.500 1.500l6 6M7.500 1.500l-6 6" stroke="#000" strokeWidth="1.600" /></svg>
      </PushButton>
    </div>
  );
}

// ---------------------------------------------------------------- drawings

function Bubble({ x, y, text }: { x: number; y: number; text: string }) {
  return (
    <>
      <circle cx={x} cy={y} r="4.500" fill="#300030" stroke="#f0f" strokeWidth="1.200" />
      <text x={x} y={y + 2} textAnchor="middle" fontSize="6" fontWeight="700" fill="#fff">
        {text}
      </text>
    </>
  );
}

function ModelSpace() {
  const arrows = [
    [929, 145], [930, 183], [946, 173], [930, 248], [947, 237], [930, 314], [946, 314], [949, 341],
  ];
  return (
    <svg className="absolute inset-0 size-full" fontFamily="Liberation Sans, sans-serif">
      <g transform="translate(-27 -123)" fill="none">
        <path d="M149.500 123V554.500H180M163.500 123V551.500H180" stroke="#fff" />
        <g stroke="#fff">
          <path d="M38.500 644.500h10v10h-10zM43.500 650V597M43.500 649.500H95" />
          <path d="M38.500 597.500h10.500L43.500 585zM95.500 644.500v10.500L108 649.500zM41.500 597l2-10 2 10M96 647.500l10 2-10 2" />
        </g>
        <text x="45" y="576" textAnchor="middle" fontSize="16" fill="#ddd">Y</text>
        <text x="122" y="655" textAnchor="middle" fontSize="16" fill="#ddd">X</text>

        {/* upper reinforcement plan */}
        <path d="M874.500 123V350M917.500 123V137M867 136.500H954M867 241.500H954M867 313.500H954M867 349.500H954" stroke="#f0f" />
        <path d="M873.500 135.500H954M873.500 139.500H954M873.500 315V350" stroke="#0ff" />
        <path d="M875.500 139V349" stroke="#fff" />
        <path d="M876 338.500h42M876 340.500h42M876 347.500h42" stroke="#aaa" />
        <path d="M918 137V340" stroke="#fff" strokeWidth="3" />
        <path d="M918 145V162M918 338v4" stroke="#0ff" strokeWidth="3" />
        <path
          d="M919.500 138V349M938.500 138V348M942.500 138V348M918 148.500h24M918 152.500h24M918 213.500h24M918 218.500h24M918 278.500h24M918 283.500h24M918 348.500h36M938 203.500h16M938 207.500h16M938 268.500h16M938 273.500h16M938 333.500h16M938 338.500h16"
          stroke="#00e840"
        />
        <path
          d="M918 152L942 138M942 150L918 213M942 214L918 278M942 279L918 348M954 145L939 205M954 208L939 270M942 274C944 282 948 286 954 289M954 288L939 334M954 228C940 245 940 260 940 272M939 348L954 339M938 172h8M928 281h8M930 278v6"
          stroke="#fff"
        />
        {arrows.map(([x, y]) => (
          <g key={`${x}-${y}`}>
            <path d={`M${x - 3} ${y}l4-4 3 4-3 4z`} fill="#fff" />
            <path d={`M${x - 2} ${y + 1}h3v3h-3z`} fill="#e8e000" />
          </g>
        ))}
        <Bubble x={862} y={136} text="aб" />
        <Bubble x={862} y={241} text="aб'" />
        <Bubble x={862} y={313} text="aб'" />
        <Bubble x={862} y={349} text="aб" />

        <path d="M853 378.500h101M853 381.500h101M853 384.500h101" stroke="#fff" />
        <g fill="#e00000" fontSize="6">
          <text x="866" y="403" fontWeight="700">NACRT ARMATURE STROPN</text>
          <text x="866" y="411">- donja zona - dodatna armatur</text>
        </g>

        {/* lower reinforcement plan */}
        <path d="M870.500 435V660M913.500 435V545M951.500 435V650M864 447.500H954M864 552.500H954M864 623.500H954M867 659.500H954" stroke="#f0f" />
        <path d="M871 447V625" stroke="#f0f" strokeWidth="2" />
        <path d="M869.500 445.500H954M869.500 449.500H954M869.500 625V661H954M872.500 625V661M915.500 450V651H912M914.500 455V472M950.500 500V519H954M950.500 549V560M951.500 628V645h3" stroke="#0ff" />
        <path d="M914 455V472" stroke="#0ff" strokeWidth="4" />
        <path d="M872.500 449V625M912.500 445V648M915.500 445V505" stroke="#fff" />
        <path d="M873 648.500h40M873 650.500h40M873 657.500h81" stroke="#aaa" />
        <path d="M952 450V500M952 567h-2v14h4M951 570l3 5-3 5" stroke="#fff" />
        <Bubble x={871} y={430} text="a1" />
        <Bubble x={914} y={430} text="a1'" />
        <Bubble x={951} y={430} text="a2" />
        <Bubble x={859} y={447} text="aб" />
        <Bubble x={859} y={552} text="aб'" />
        <Bubble x={859} y={623} text="aб'" />
        <Bubble x={859} y={660} text="aб" />
      </g>
    </svg>
  );
}

function SeriesView() {
  // each stirrup is the front one moved up and to the left
  const bars = Array.from({ length: 47 }, (_, i) => i);
  return (
    <svg className="block h-[264px] w-full border-t border-[#808080] bg-black">
      {bars.map((i) => (
        <path
          key={i}
          transform={`translate(${-Math.round(12.7 * i)} ${-Math.round(6.3 * i)})`}
          d="M349.500 138.500L237.500 194.500V226.500L350.500 170"
          fill="none"
          stroke="#00f"
        />
      ))}
    </svg>
  );
}

function SegmentView() {
  const marks = Array.from({ length: 45 }, (_, i) => 21 + i * 4.66);
  return (
    <svg className="mt-[2px] block h-[188px] w-full border-t border-l border-[#808080] bg-black">
      {marks.map((x) => (
        <path key={x} d={`M${Math.round(x) + 0.5} 73V114`} stroke="#5c5c5c" />
      ))}
      <path d="M16.500 72.500h214v42h-214z" fill="none" stroke="#f00" />
      <circle cx="16.500" cy="114.500" r="4" fill="#f00" />
    </svg>
  );
}

function Globe() {
  const ticks = Array.from({ length: 24 }, (_, i) => i * 15);
  return (
    <svg width="54" height="54" viewBox="-27 -27 54 54" fill="none" stroke="#000">
      <circle r="26" strokeWidth="1.300" />
      <circle r="22" strokeWidth=".8" />
      {ticks.map((a) => (
        <path key={a} d="M0-26V-22" transform={`rotate(${a})`} />
      ))}
      <circle r="17" fill="#9c9890" strokeWidth="1.500" />
      <ellipse cy="-3" rx="12" ry="11" fill="#d8d4cc" stroke="none" />
      <path d="M-16 7C-10 10 10 10 16 7L12 12 6 14H-6L-12 12z" fill="#000" />
      <path d="M0-17V17M-17-3C-10 1 10 1 17-3M-13-11C-6-8 6-8 13-11" />
      <ellipse rx="8" ry="17" />
      <path d="M-7 14C-3 15 3 15 7 14" stroke="#d4d0c8" />
    </svg>
  );
}

function HookIcon() {
  return (
    <svg width="14" height="8" viewBox="0 0 14 8" fill="none">
      <path d="M4 2H2v3.500h10V2h-2" stroke="#111" strokeWidth="2" strokeLinejoin="round" />
    </svg>
  );
}

function StirrupIcon() {
  return (
    <svg width="14" height="14" viewBox="0 0 14 14" fill="none" stroke="#111">
      <rect x="1.500" y="1.500" width="11" height="11" rx="1.500" strokeWidth="2" />
      <path d="M4 5l2 3M7 4l3 2" strokeWidth="1.300" />
    </svg>
  );
}

// ---------------------------------------------------------------- dialog

const bars = [
  { no: 4, shape: "M4 9.500h90", dia: 12 },
  { no: 5, shape: "M4 9.500h90", dia: 20 },
  { no: 6, shape: "M4 9.500h90", dia: 14 },
  { no: 7, shape: "M4 9.500h90", dia: 20 },
  { no: 8, shape: "M4 9.500h90", dia: 12 },
  { no: 9, shape: "M11 1.500h77.500v16H10", dia: 10 },
  { no: 10, shape: "M9.500 1.500h80v16h-68M9.500 1.500v15M10 17h4M17 17h4M10 7h1v3", dia: 10 },
  { no: 11, shape: "M15 1.500h69.500v16H14", dia: 10, selected: true },
];

const headCell =
  "h-[19px] border-r border-b border-[#404040] bg-[#d4d0c8] p-0 font-normal shadow-[inset_1px_1px_0_#fff]";
const bodyCell = "h-[19px] border-r border-b border-[#c0c0c0] p-0 text-center";

function BarTable() {
  return (
    <div className="mt-[10px] ml-px flex border-t border-r border-b border-l border-t-[#404040] border-r-white border-b-white border-l-[#404040]">
      <table className="flex-1 table-fixed border-separate border-spacing-0">
        <thead>
          <tr>
            <th className={`${headCell} w-[48px] pl-[5px] text-left`}>Nº</th>
            <th className={headCell}>Shape</th>
            <th className={`${headCell} w-[50px]`}>Type</th>
            <th className={`${headCell} w-[30px]`}>Ø</th>
          </tr>
        </thead>
        <tbody>
          {bars.map((bar) => (
            <tr key={bar.no} className={bar.selected ? "bg-[#dedeff]" : "bg-white"}>
              <th className={headCell}>
                <span className="flex items-center gap-1 pl-[5px]">
                  {bar.no === 10 ? <StirrupIcon /> : <HookIcon />}
                  {bar.no}
                </span>
              </th>
              <td className={bodyCell}>
                <svg width="98" height="18" className="block" fill="none" stroke="#111">
                  <path d={bar.shape} />
                </svg>
              </td>
              <td className={bodyCell}>B500B</td>
              <td className={bodyCell}>{bar.dia}</td>
            </tr>
          ))}
        </tbody>
      </table>
      <div className={`flex w-[17px] flex-col ${dither}`}>
        <PushButton label="Scroll up" className="h-4">
          <Triangle dir="up" />
        </PushButton>
        <div className={`mt-[10px] h-6 ${raised}`} />
        <PushButton label="Scroll down" className="mt-auto h-4">
          <Triangle />
        </PushButton>
      </div>
    </div>
  );
}

const groupBox = "border border-[#808080] shadow-[1px_1px_0_#fff,inset_1px_1px_0_#fff]";

function SeriesDialog() {
  return (
    <div
      role="dialog"
      aria-label="Constant series in longitudinal section"
      className="absolute top-[90px] left-[171px] w-[683px] border-2 border-t-white border-r-[#505050] border-b-[#505050] border-l-white bg-[#d4d0c8] text-[11px] text-black"
    >
      <div className="flex h-[18px] items-center bg-linear-to-r from-[#0a246a] to-[#a6caf0] pr-[2px] pl-1 font-bold text-white">
        <svg width="13" height="14" viewBox="0 0 13 14" fill="none" stroke="#fff" strokeWidth="1.400">
          <path d="M4 1.500h5.500l1.500 1.500v8l-1.500 1.500h-6L2 11V4zM7 2l1 4M4 5l2 2" />
        </svg>
        <span className="ml-[2px] flex-1">Constant series in longitudinal section</span>
        <PushButton label="Close dialog" className="h-[14px] w-4">
          <svg width="10" height="10"><path d="M1.500 1.500l6 6M7.500 1.500l-6 6" stroke="#000" strokeWidth="1.600" /></svg>
        </PushButton>
      </div>

      <div className="grid grid-cols-[249px_1fr] gap-x-[9px] pr-[10px] pb-1 pl-3">
        <div className="pt-[13px]">
          <div className="flex items-center justify-end gap-[6px] pr-[2px]">
            <label htmlFor="forms">Forms</label>
            <Combo id="forms" value="Reinforcement - bas" className="h-[21px] w-[118px]" />
          </div>
          <BarTable />
          <PushButton className="mt-[6px] h-[25px] w-full">Standard bar</PushButton>
          <SegmentView />
          <fieldset className={`mt-2 px-[5px] pb-[7px] ${groupBox}`}>
            <legend className="ml-[2px] bg-[#d4d0c8] px-px leading-3">Segments</legend>
            <div className="mt-1 grid grid-cols-[75px_48px_54px_1fr] items-center gap-x-[6px] gap-y-[9px]">
              <span className="flex items-center gap-1">
                <CheckBox id="percentage" />
                <label htmlFor="percentage">Percentage</label>
              </span>
              <label htmlFor="seg-l" className="text-right">L=</label>
              <NumberBox id="seg-l" value="464.99" className="h-[23px]" />
              <PushButton label="Apply L" className="ml-2 size-[23px]">!</PushButton>
              <PushButton className="h-[23px]">Add</PushButton>
              <label htmlFor="seg-e" className="text-right">e=</label>
              <NumberBox id="seg-e" value="10.00" className="h-[23px]" />
              <span>(10.11)</span>
              <PushButton className="h-[23px]">Delete</PushButton>
              <label htmlFor="seg-n" className="text-right">n=</label>
              <NumberBox id="seg-n" value="47" className="h-[23px]" />
            </div>
          </fieldset>
        </div>

        <div className="flex flex-col pt-[15px]">
          <Combo label="View" value="Series - 3D View" className="mr-4 ml-1 h-5" />
          <div className="mt-[6px] mr-1">
            <SeriesView />
          </div>

          <div className="mt-[7px] flex">
            <div className="w-[226px]">
              <div className="grid grid-cols-[1fr_118px] items-center gap-x-2 gap-y-[3px] text-right">
                <label htmlFor="label">Label</label>
                <Combo id="label" value="PBAB_1" className="h-[21px]" />
                <label htmlFor="comment">Comment</label>
                <Combo id="comment" value="" className="h-[21px]" />
              </div>
              <div className={`mt-[5px] flex flex-col pt-[2px] pr-[6px] pl-2 ${groupBox}`}>
                <div className="flex h-[19px] items-center justify-between">
                  <label htmlFor="spec">Specification</label>
                  <CheckBox id="spec" checked />
                </div>
                <div className="flex h-[19px] items-center justify-between">
                  <label htmlFor="both">Both-sided</label>
                  <CheckBox id="both" />
                </div>
                <div className="flex h-[19px] items-center justify-between">
                  <label htmlFor="radial" className="text-[#808080] text-shadow-[1px_1px_0_#fff]">Radial</label>
                  <CheckBox id="radial" disabled />
                </div>
              </div>
            </div>
            <div className="flex flex-1 flex-col items-end justify-between pr-1 pb-[2px]">
              <Globe />
              <PushButton className="h-5 w-[76px]">Angle</PushButton>
            </div>
          </div>

          <div className="mt-2 flex items-start gap-[7px]">
            <fieldset className={`w-[167px] pb-2 pl-1 ${groupBox}`}>
              <legend className="ml-[2px] bg-[#d4d0c8] px-px leading-3">Series baseline</legend>
              <div className="mt-[2px] grid grid-cols-[57px_54px_11px_23px] items-center gap-x-[5px] gap-y-1">
                <label htmlFor="sum-l" className="text-right">ΣL =</label>
                <NumberBox id="sum-l" value="464.99" className="h-[23px]" />
                <span />
                <PushButton label="Apply total length" className="size-[23px]">!</PushButton>
                <label htmlFor="fn" className="text-right">Fn =</label>
                <NumberBox id="fn" value="0.00" className="h-[23px]" />
                <span />
                <PushButton label="Apply Fn" className="size-[23px]">!</PushButton>
                <label htmlFor="alpha" className="text-right">
                  <i className="font-['Liberation_Serif',serif]">α</i>1 =
                </label>
                <NumberBox id="alpha" value="90.00" className="h-[23px]" />
                <span>°</span>
                <PushButton label="Apply angle" className="size-[23px]">!</PushButton>
                <label htmlFor="h1" className="text-right">h1=</label>
                <NumberBox id="h1" value="90.00" className="h-[23px]" />
                <span />
                <PushButton label="Apply h1" className="size-[23px]">!</PushButton>
              </div>
            </fieldset>

            <div className="flex-1">
              <fieldset className={`pb-[11px] ${groupBox}`}>
                <legend className="ml-[6px] bg-[#d4d0c8] px-px leading-3">Offset</legend>
                <div className="mt-[2px] grid grid-cols-[31px_47px_47px_47px_31px] items-center gap-x-1 gap-y-[6px] text-center">
                  <label htmlFor="off-u" className="col-start-2 pr-[14px] text-right">U</label>
                  <NumberBox id="off-u" value="0.00" className="h-[22px]" />
                  <label htmlFor="off-l" className="col-start-1">L</label>
                  <NumberBox id="off-l" value="0.00" className="h-[22px]" />
                  <NumberBox label="Centre offset" value="0.00" className="h-[22px]" />
                  <NumberBox id="off-r" value="0.00" className="h-[22px]" />
                  <label htmlFor="off-r">R</label>
                  <label htmlFor="off-d" className="col-start-2 pr-[14px] text-right">D</label>
                  <NumberBox id="off-d" value="0.00" className="h-[22px]" />
                </div>
              </fieldset>
              <div className="mt-[5px] flex justify-end gap-2">
                <button type="button" className={`flex h-[23px] w-[75px] items-center gap-5 pl-1 ${raised}`}>
                  <svg width="14" height="14" viewBox="0 0 14 14">
                    <path d="M1 7l3-1 2 3 6-8 1 1-6 10H4z" fill="#10a010" stroke="#064806" strokeWidth=".7" />
                  </svg>
                  OK
                </button>
                <button type="button" className={`flex h-[23px] w-[76px] items-center gap-3 pl-1 ${raised}`}>
                  <svg width="14" height="14" viewBox="0 0 14 14">
                    <path d="M1 2l3-1 3 4 4-4 2 1-4 5 4 5-3 1-3-4-4 4-2-1 4-5z" fill="#c01818" stroke="#500808" strokeWidth=".7" />
                  </svg>
                  Cancel
                </button>
              </div>
            </div>
          </div>
        </div>
      </div>
    </div>
  );
}

// ---------------------------------------------------------------- main window

const menus = [
  "File", "Edit", "View", "Insert", "Format", "Tools", "Draw", "Dimension",
  "Modify", "Window", "Help", "Express", "ArmCAD",
];

const drawTools = [
  "Line", "Construction Line", "Polyline", "Polygon", "Rectangle", "Arc", "Circle",
  "Revision Cloud", "Spline", "Ellipse", "Ellipse Arc", "Insert Block", "Make Block",
  "Point", "Hatch", "Gradient", "Region", "Table", "Multiline Text",
];

const modifyTools = [
  "Erase", "Copy Object", "Mirror", "Offset", "Array", "Move", "Rotate", "Scale", "Stretch",
  "Trim", "Extend", "Break Point", "Break", "Join", "Chamfer", "Fillet", "Explode",
];

const modes: [string, boolean][] = [
  ["SNAP", true], ["GRID", false], ["ORTHO", false], ["POLAR", true], ["OSNAP", true],
  ["OTRACK", true], ["DUCS", true], ["DYN", true], ["LWT", false], ["MODEL", true],
];

function TitleAndMenu() {
  return (
    <header>
      <div className="flex h-[18px] items-center bg-linear-to-r from-[#808080] to-[#b8b8b8] pl-[2px] text-[11px] font-bold text-[#d4d0c8]">
        <svg width="16" height="16" viewBox="0 0 16 16">
          <path d="M0 0h16v16H0z" fill="#0a8080" />
          <path d="M1 9l3-7 3 7M2 7h4M9 8v6M6 11h8M11 4v10M8 14h6" stroke="#fff" strokeWidth="1.300" fill="none" />
        </svg>
        <h1 className="ml-px flex-1">AutoCAD 2008 - [F:\ArmCAD Gallery\005.dwg]</h1>
        <WindowButtons />
      </div>
      <div className="flex h-5 items-center pl-1 text-[11px] text-[#808080]">
        <svg width="16" height="16" viewBox="0 0 16 16">
          <path d="M4 2h7l4 5v5L4 7z" fill="#10386c" />
          <path d="M1 7l9 1 5 3v4H1z" fill="#f0c830" stroke="#8a7020" strokeWidth=".6" />
          <path d="M4 0v6M1 3h6" stroke="#f8e890" />
        </svg>
        <nav className="flex flex-1">
          {menus.map((item) => (
            <button key={item} type="button" className="pr-[5px] pl-[6px]">
              {item}
            </button>
          ))}
        </nav>
        <input
          aria-label="Help search"
          placeholder="Type a question for help"
          className={`h-[18px] w-[200px] pl-[3px] placeholder:text-[#808080] ${sunken}`}
        />
        <div className="mr-[10px] flex h-[18px] items-center rounded-r-sm border border-[#a0a0a0] bg-[#eceae6]">
          <button type="button" aria-label="Search" className="flex w-[28px] items-center justify-center gap-1">
            <svg width="14" height="14" viewBox="0 0 14 14">
              <circle cx="8.500" cy="5.500" r="4" fill="#d8e6f8" stroke="#6a80b8" strokeWidth="1.500" />
              <path d="M5.500 8.500L1.500 13" stroke="#6a80b8" strokeWidth="2" />
            </svg>
            <svg width="5" height="4"><path d="M0 0h5L2.500 3z" fill="#444" /></svg>
          </button>
          <button type="button" aria-label="Communication Center" className="flex w-[18px] justify-center border-x border-[#b0b0b0]">
            <svg width="14" height="14" viewBox="0 0 14 14" fill="none" stroke="#4a5a80">
              <path d="M2 2c0 5 4 8 9 7z" fill="#a8b4d0" />
              <path d="M6 9l-3 4h8l-2-4M7 6l4-4M9 1c2 0 3 1 3 3" strokeWidth="1.300" />
            </svg>
          </button>
          <button type="button" aria-label="Favorites" className="flex w-[17px] justify-center">
            <svg width="13" height="13" viewBox="0 0 14 14">
              <path d="M7 1l2 4h4l-3 3 1 5-4-3-4 3 1-5-3-3h4z" fill="#3a5a98" />
            </svg>
          </button>
        </div>
        <WindowButtons />
      </div>
    </header>
  );
}

function LayerCombo() {
  return (
    <div className={`flex h-5 w-[298px] items-center pl-1 text-[#808080] ${sunken}`}>
      <svg width="76" height="16" viewBox="0 0 76 16">
        <path d="M4 2c6-2 7 5 3 8H4C0 7 1 3 4 2z" fill="#fcf8a0" stroke="#887" />
        <path d="M4 10h4v4H4z" fill="#999" />
        <circle cx="23" cy="8" r="5.500" fill="#ffe810" stroke="#b89a00" />
        <circle cx="39" cy="7" r="4.500" fill="#a8c0d8" stroke="#6a88a8" strokeWidth="1.500" />
        <path d="M41 8h6v6h-6z" fill="#fff" stroke="#778" />
        <path d="M53 7V4c1-3 5-3 6 0v3" stroke="#8a8a20" fill="none" strokeWidth="1.500" />
        <path d="M56 6h7v8h-7z" fill="#d8e020" stroke="#665" />
        <path d="M66.500 3.500h9v9h-9z" fill="#fff" stroke="#000" />
      </svg>
      <select aria-label="Layer" className="ml-1 h-full flex-1 appearance-none bg-transparent">
        <option>ARMATURA</option>
      </select>
      <span className={`flex h-[17px] w-4 items-center justify-center ${raised}`}>
        <Triangle color="#808080" />
      </span>
    </div>
  );
}

function Toolbars() {
  return (
    <div className="flex flex-col overflow-hidden text-[11px]">
      <div className="flex h-[28px]">
        <Toolbar>
          <Tools names={["New", "Open", "Save", "|", "Plot", "Plot Preview", "Publish", "3DDWF", "|", "Cut", "Copy", "Paste", "Brush", "Match Properties", "|", "Undo"]} />
          <span className="flex w-3 justify-center"><Triangle color="#f4f2ee" /></span>
          <ToolButton name="Redo" />
          <span className="flex w-3 justify-center"><Triangle color="#f4f2ee" /></span>
          <Tools names={["|", "Pan", "Zoom", "Zoom Window", "Zoom Previous", "|", "Properties", "DesignCenter", "Tool Palettes", "Sheet Set Manager", "Markup Set Manager", "QuickCalc", "|", "Help"]} />
          <span className="w-1" />
        </Toolbar>
        <Toolbar className="flex-1">
          <ToolButton name="Text Style" />
          <Combo muted label="Text style" value="&nbsp;&nbsp;&nbsp;KOTE" className="ml-px h-5 w-[118px] shrink-0" />
          <Tools names={["|", "Dimension Style"]} />
          <Combo muted label="Dimension style" value="&nbsp;&nbsp;&nbsp;1-50" className="ml-[2px] h-5 w-[118px] shrink-0" />
          <Tools names={["|", "Table Style"]} />
          <Combo muted label="Table style" value="Standard" className="ml-[2px] h-5 w-[118px] shrink-0" />
        </Toolbar>
      </div>
      <div className="flex h-[28px]">
        <Toolbar>
          <Combo muted label="Workspace" value="AutoCAD Classic" className="h-5 w-[173px]" />
          <span className="w-[2px]" />
          <Tools names={["Workspace Settings", "My Workspace"]} />
          <span className="w-[3px]" />
        </Toolbar>
        <Toolbar>
          <ToolButton name="Layers" />
          <LayerCombo />
          <Tools names={["Layer Current", "Layer Previous", "Layer States"]} />
          <span className="w-1" />
        </Toolbar>
        <Toolbar>
          <Tools names={["Bar Label", "Bar Edit", "Bar List"]} />
          <span className="w-1" />
        </Toolbar>
        <Toolbar>
          <Tools names={["Section Box", "Section T", "Section L"]} />
          <span className="w-1" />
        </Toolbar>
        <Toolbar>
          <Tools names={["Module Bar", "Module Section", "Module Text", "Module Mesh"]} />
          <span className="w-1" />
        </Toolbar>
      </div>
      <div className="flex h-[28px]">
        <Toolbar>
          <Tools names={["Series Spring", "Constant Series", "Delete Series", "Variable Series", "Series Layout", "|", "Draw Bar", "|", "Series Cut"]} />
          <span className="w-[669px]" />
          <Tools names={["Corner Points", "Bar Clamp", "Column Points", "Bar Couple"]} />
          <span className="w-[3px]" />
        </Toolbar>
      </div>
    </div>
  );
}

function LayoutTabs() {
  return (
    <div className="flex h-[17px] items-stretch bg-[#d4d0c8] text-[11px]">
      <PushButton label="First tab" className="w-[15px]">
        <svg width="9" height="9"><path d="M1.500 1v7M8 1v7L3 4.500z" fill="#808080" stroke="#808080" strokeWidth=".7" /></svg>
      </PushButton>
      <PushButton label="Previous tab" className="w-[15px]"><Triangle dir="left" color="#808080" /></PushButton>
      <PushButton label="Next tab" className="w-[15px]"><Triangle dir="right" /></PushButton>
      <PushButton label="Last tab" className="w-[15px]">
        <svg width="9" height="9"><path d="M7.500 1v7M1 1v7l5-3.500z" fill="#000" stroke="#000" strokeWidth=".7" /></svg>
      </PushButton>
      <button type="button" className="w-[54px] bg-black text-white [clip-path:polygon(0_0,100%_0,92%_100%,10%_100%)]">Model</button>
      <button type="button" className="border-b border-[#404040] px-1 text-black">Space</button>
      <div className="flex-1 border-b border-[#808080]" />
      <div className={`flex w-[300px] justify-end ${dither}`}>
        <PushButton label="Scroll right" className="w-[15px]"><Triangle dir="right" /></PushButton>
      </div>
    </div>
  );
}

function Workspace() {
  return (
    <main className="flex min-h-0 flex-1 border-t border-[#808080]">
      <div className="w-[26px]">
        <SideBar names={drawTools} />
      </div>
      <div className="flex flex-1 flex-col border-l border-[#606060]">
        <div className="flex flex-1">
          <div className="relative flex-1 bg-black">
            <ModelSpace />
          </div>
          <div className={`flex w-4 flex-col ${dither}`}>
            <PushButton label="Scroll view up" className="h-4"><Triangle dir="up" /></PushButton>
            <div className="flex-3" />
            <div className={`h-4 ${raised}`} />
            <div className="flex-5" />
            <PushButton label="Scroll view down" className="h-4"><Triangle /></PushButton>
          </div>
        </div>
        <div className="flex">
          <div className="flex-1"><LayoutTabs /></div>
          <div className="w-4" />
        </div>
      </div>
      <div className="ml-[3px] flex w-[51px] gap-px border-l border-white">
        <div className="flex flex-col gap-[2px]">
          <SideBar names={["Mesh Single", "Mesh Group", "|", "Mesh Sheet", "|", "Mesh Opening", "Mesh Delete", "Mesh Move", "Mesh Cut", "Mesh Fill", "|", "Mesh Section"]} />
          <SideBar names={["Wand", "Wand Bar"]} />
          <SideBar names={["Bar Table", "Bar Percent", "Hammer", "Radius Label", "Draw Order"]} />
        </div>
        <div className="flex flex-col gap-[3px]">
          <SideBar names={modifyTools} />
          <SideBar names={["Bring to Front", "Send to Back", "Bring Above", "Send Under"]} />
        </div>
      </div>
    </main>
  );
}

function CommandLine() {
  return (
    <section className="mt-[3px] border-t-2 border-[#202020] pt-[10px] pr-2 pb-[3px] pl-[9px]">
      <div className="flex gap-[2px]">
        <span className="flex gap-px">
          <span className="w-[3px] border-x border-l-white border-r-[#808080]" />
          <span className="w-[2px] border-l border-white" />
        </span>
        <div className={`flex-1 bg-[#d4d0c8] font-['Liberation_Mono',monospace] text-[13px] text-black ${sunken}`}>
          <div className="flex h-[23px] border-b border-[#606060] bg-white">
            <output className="flex-1 pl-px">Object selection:</output>
            <div className="flex w-4 flex-col">
              <PushButton label="History up" className="h-[11px]"><Triangle dir="up" /></PushButton>
              <PushButton label="History down" className="h-[11px]"><Triangle /></PushButton>
            </div>
          </div>
          <div className="mr-4 flex h-[18px]">
            <input aria-label="Command" className="flex-1 border-l border-[#404040] bg-white outline-none" />
            <div className={`flex w-[62px] ${dither}`}>
              <PushButton label="Command left" className="w-4"><Triangle dir="left" /></PushButton>
              <div className={`w-[15px] ${raised}`} />
              <PushButton label="Command right" className="ml-auto w-[15px]"><Triangle dir="right" /></PushButton>
            </div>
          </div>
        </div>
      </div>
    </section>
  );
}

function StatusBar() {
  return (
    <footer className="flex h-[23px] items-center border-t border-[#808080] pt-px pl-1 font-['Liberation_Sans',sans-serif] text-[11px] text-black">
      <div className="mr-1 flex h-[19px] w-[184px] items-center border border-t-[#808080] border-r-white border-b-white border-l-[#808080] pl-[3px]">
        -59032.5000, -7145.5000, 0.0000
      </div>
      <div className="flex gap-[3px]">
        {modes.map(([name, on]) => (
          <button
            key={name}
            type="button"
            aria-pressed={on}
            className={
              on
                ? "h-[19px] border border-t-[#202020] border-r-white border-b-white border-l-[#202020] px-px"
                : "h-[19px] border border-t-white border-r-[#808080] border-b-[#808080] border-l-white px-px"
            }
          >
            {name}
          </button>
        ))}
      </div>
      <div className="flex-1" />
      <span>Annotation Scale:</span>
      <button type="button" className="ml-2 flex items-center gap-1">
        1/8" = 1'-0" <Triangle />
      </button>
      <svg className="ml-3" width="38" height="16" viewBox="0 0 38 16">
        <path d="M1 15L5 5l4 10H6l-1-3-1 3z" fill="#6a98d0" stroke="#2a5090" strokeWidth=".7" />
        <circle cx="10" cy="4" r="3" fill="#ffe860" stroke="#b8a020" strokeWidth=".6" />
        <path d="M25 15l4-10 4 10h-3l-1-3-1 3z" fill="#c4c4c4" stroke="#888" strokeWidth=".7" />
        <path d="M36 1l-5 6h3l-3 5" stroke="#909090" fill="none" />
      </svg>
      <div className="ml-1 flex h-[19px] items-center gap-1 border border-t-[#808080] border-r-white border-b-white border-l-[#808080] px-1">
        <svg width="34" height="17" viewBox="0 0 34 17">
          <path d="M8 8V3c1-3 5-3 6 0v3" stroke="#555" strokeWidth="1.600" fill="none" />
          <path d="M2 7h9v9H2z" fill="#f0c000" stroke="#3a2a00" />
          <path d="M6.500 9v5" stroke="#3a2a00" strokeWidth="1.500" />
          <path d="M20 2h7l3 3v9H20z" fill="#fff" stroke="#3878b8" />
          <path d="M22 4v4M24 3v5" stroke="#3878b8" />
          <circle cx="28" cy="11.500" r="4.500" fill="#18a040" />
          <path d="M25.500 11.500l2 2 3-4" stroke="#fff" strokeWidth="1.500" fill="none" />
        </svg>
      </div>
      <span className="mx-2 pt-2"><Triangle /></span>
      <button type="button" aria-label="Clean Screen" className="mr-1">
        <svg width="15" height="17" viewBox="0 0 15 17">
          <rect x="1.500" y="1.500" width="12" height="14" rx="1" fill="#b8d8f4" stroke="#1e60b0" strokeWidth="2" />
        </svg>
      </button>
    </footer>
  );
}

export default function App() {
  return (
    <div className="relative flex min-h-screen flex-col overflow-hidden bg-[#d4d0c8] font-['DejaVu_Sans_Condensed','DejaVu_Sans',sans-serif]">
      <TitleAndMenu />
      <Toolbars />
      <Workspace />
      <CommandLine />
      <StatusBar />
      <SeriesDialog />
    </div>
  );
}
